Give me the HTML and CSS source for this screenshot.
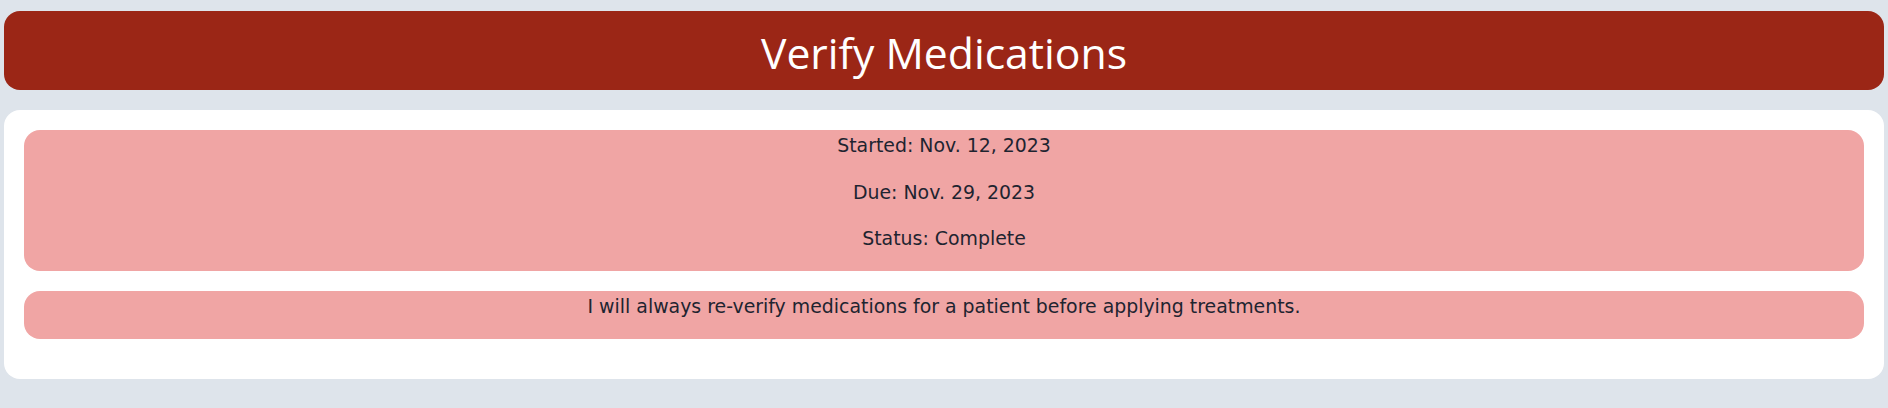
FILE: index.html
```html
<!DOCTYPE html>
<html lang="en">
<head>
<meta charset="utf-8">
<title>Verify Medications</title>
<link rel="stylesheet" href="styles.css">
</head>
<body>
<div class="page">
  <header class="banner">
    <h1 class="banner-title">Verify Medications</h1>
  </header>
  <main class="card">
    <section class="info-box">
      <p class="info-line">Started: Nov. 12, 2023</p>
      <p class="info-line">Due: Nov. 29, 2023</p>
      <p class="info-line">Status: Complete</p>
    </section>
    <section class="info-box">
      <p class="info-line">I will always re-verify medications for a patient before applying treatments.</p>
    </section>
  </main>
</div>
</body>
</html>
```
FILE: styles.css
```css
html, body {
  margin: 0;
  padding: 0;
  background: #dee4eb;
}
body {
  font-family: "DejaVu Sans", Verdana, sans-serif;
  color: #1e2430;
}
.page {
  display: flex;
  flex-direction: column;
  gap: 20px;
  padding: 11px 4px 0 4px;
}
.banner {
  background: #9b2616;
  border-radius: 16px;
  height: 79px;
  display: flex;
  align-items: center;
  justify-content: center;
}
.banner-title {
  margin: 0;
  font-family: "Open Sans", "Noto Sans", sans-serif;
  font-weight: 400;
  font-size: 42.7px;
  line-height: 1;
  color: #ffffff;
  padding-top: 6px;
}
.card {
  background: #ffffff;
  border-radius: 16px;
  padding: 20px 20px 40px 20px;
  display: flex;
  flex-direction: column;
  gap: 20px;
}
.info-box {
  background: #f0a5a4;
  border-radius: 16px;
  padding: 1px 0 19px 0;
  display: flex;
  flex-direction: column;
  gap: 18.5px;
  text-align: center;
}
.info-line {
  margin: 0;
  font-size: 18.9px;
  line-height: 28px;
}
```
